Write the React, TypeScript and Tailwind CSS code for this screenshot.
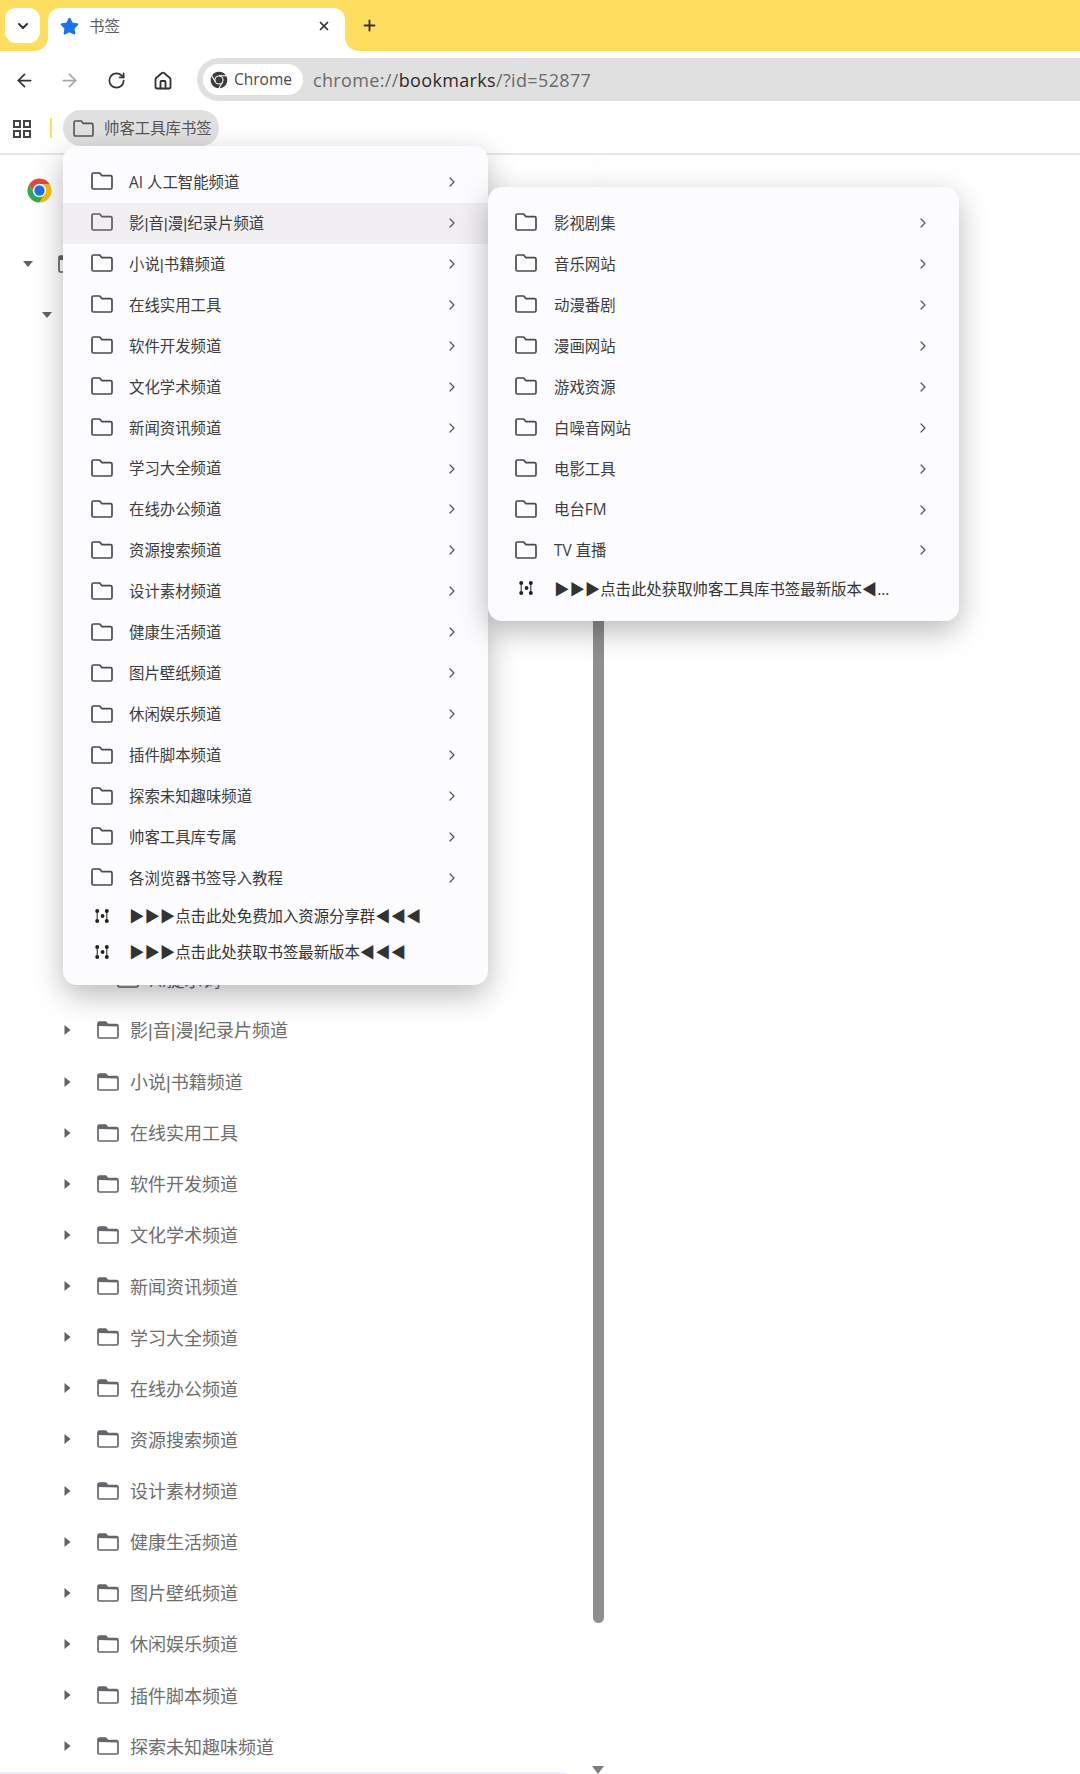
import React from 'react';
import { ArrowLeft, ArrowRight, ChevronDown, ChevronRight, Home, Plus, RotateCw, Star, X } from 'lucide-react';

const mainMenu = [
  'AI 人工智能频道',
  '影|音|漫|纪录片频道',
  '小说|书籍频道',
  '在线实用工具',
  '软件开发频道',
  '文化学术频道',
  '新闻资讯频道',
  '学习大全频道',
  '在线办公频道',
  '资源搜索频道',
  '设计素材频道',
  '健康生活频道',
  '图片壁纸频道',
  '休闲娱乐频道',
  '插件脚本频道',
  '探索未知趣味频道',
  '帅客工具库专属',
  '各浏览器书签导入教程',
];

const subMenu = ['影视剧集', '音乐网站', '动漫番剧', '漫画网站', '游戏资源', '白噪音网站', '电影工具', '电台FM', 'TV 直播'];

const treeRows = [
  '影|音|漫|纪录片频道',
  '小说|书籍频道',
  '在线实用工具',
  '软件开发频道',
  '文化学术频道',
  '新闻资讯频道',
  '学习大全频道',
  '在线办公频道',
  '资源搜索频道',
  '设计素材频道',
  '健康生活频道',
  '图片壁纸频道',
  '休闲娱乐频道',
  '插件脚本频道',
  '探索未知趣味频道',
];

// 竖线用窄字体显示
const Label: React.FC<{ text: string }> = ({ text }) => (
  <>
    {text.split('|').map((part, i) => (
      <React.Fragment key={i}>
        {i > 0 && <span className="font-['Liberation_Sans',sans-serif]">|</span>}
        {part}
      </React.Fragment>
    ))}
  </>
);

// 文件夹图标
const FolderIcon: React.FC<{ className?: string; filledTab?: boolean }> = ({ className, filledTab }) => (
  <svg viewBox="0 0 22 18" fill="none" className={className}>
    {filledTab && <path d="M1 5V2.5A1.5 1.5 0 0 1 2.5 1h6.2l2 3H19.5A1.5 1.5 0 0 1 21 5.5z" fill="currentColor" />}
    <path
      d="M2.5 1h6.2l2 2.6h8.8A1.5 1.5 0 0 1 21 5.1v10.4a1.5 1.5 0 0 1-1.5 1.5h-17A1.5 1.5 0 0 1 1 15.5v-13A1.5 1.5 0 0 1 2.5 1z"
      stroke="currentColor"
      strokeWidth="1.7"
      strokeLinejoin="round"
    />
  </svg>
);

// 书签小图标
const DotsIcon: React.FC = () => (
  <svg viewBox="0 0 14 14" className="w-[14px] h-[14px] text-[#222]" fill="currentColor">
    <path d="M2.2 2v10M11.8 2v10" stroke="currentColor" strokeWidth="1" />
    <circle cx="2.2" cy="2" r="2" />
    <circle cx="11.8" cy="2" r="2" />
    <circle cx="2.2" cy="12" r="2" />
    <circle cx="11.8" cy="12" r="2" />
    <circle cx="7.6" cy="7" r="1.9" />
  </svg>
);

const ChromeLogo: React.FC<{ className?: string; mono?: boolean }> = ({ className, mono }) => (
  <svg viewBox="0 0 48 48" className={className}>
    <path d="M24 4A20 20 0 0 1 41.32 14H24L15.34 29 6.68 14A20 20 0 0 1 24 4z" fill={mono ? '#3c3c3c' : '#e8453c'} />
    <path d="M41.32 14A20 20 0 0 1 24 44L32.66 29 24 14z" fill={mono ? '#3c3c3c' : '#fbbc04'} />
    <path d="M24 44A20 20 0 0 1 6.68 14L15.34 29H32.66z" fill={mono ? '#3c3c3c' : '#34a853'} />
    {mono && <path d="M24 14H44M15.34 29L5 11M32.66 29L22 47" stroke="#fff" strokeWidth="2.5" />}
    <circle cx="24" cy="24" r="11" fill="#fff" />
    <circle cx="24" cy="24" r="8.5" fill={mono ? '#3c3c3c' : '#1a73e8'} />
  </svg>
);

const CaretDown: React.FC = () => (
  <svg viewBox="0 0 12 8" className="w-[12px] h-[8px] text-[#5f6368]">
    <path d="M1 1h10L6 7z" fill="currentColor" />
  </svg>
);

const CaretRight: React.FC = () => (
  <svg viewBox="0 0 12 12" className="w-[12px] h-[12px] text-[#5f6368]">
    <path d="M3.5 1l6 5-6 5z" fill="currentColor" />
  </svg>
);

const MenuFolderRow: React.FC<{ label: string; active?: boolean; pl: string; gap: string; pr: string }> = ({ label, active, pl, gap, pr }) => (
  <div className={`h-[40.95px] flex items-center ${pl} ${pr} ${active ? 'bg-[#f1eff1]' : ''}`}>
    <FolderIcon className={`w-[22px] h-[18px] shrink-0 -mt-[2px] ${gap} ${active ? 'text-[#5d5d5d]' : 'text-[#4a4a4a]'}`} />
    <span className="flex-1 text-[15.4px] text-[#3d3d3d]">
      <Label text={label} />
    </span>
    <ChevronRight size={16} strokeWidth={1.8} className="text-[#555] -mt-[1px]" />
  </div>
);

const LinkRow: React.FC<{ label: string; gap: string }> = ({ label, gap }) => (
  <div className="h-[36px] flex items-center">
    <span className={`w-[22px] flex justify-center shrink-0 -mt-[2px] ${gap}`}>
      <DotsIcon />
    </span>
    <span className="text-[15.4px] text-[#333] whitespace-nowrap">{label}</span>
  </div>
);

const TreeRow: React.FC<{ label?: string; level: 0 | 1 | 2 | 3; open?: boolean; leaf?: boolean }> = ({ label, level, open, leaf }) => {
  const padding = ['pl-[22px]', 'pl-[41px]', 'pl-[61px]', 'pl-[81px]'][level];
  return (
    <div className={`h-[51.14px] flex items-center shrink-0 pt-[2px] ${padding}`}>
      <span className="w-[12px] flex justify-center shrink-0 mr-[24px] -mt-[2px]">
        {!leaf && (open ? <CaretDown /> : <CaretRight />)}
      </span>
      <FolderIcon filledTab className="w-[22px] h-[18px] text-[#63666a] shrink-0 mr-[11px] -mt-[2px]" />
      {label && (
        <span className="text-[18px] text-[#6e6e6e] whitespace-nowrap">
          <Label text={label} />
        </span>
      )}
    </div>
  );
};

export default function App() {
  return (
    <div className="relative w-[1080px] h-[1774px] overflow-hidden bg-white font-['Open_Sans','Noto_Sans_CJK_SC',sans-serif]">
      {/* 标签栏 */}
      <div className="flex h-[51px]">
        <div className="w-[48px] bg-[#ffdd5f] rounded-br-[14px] pt-[8px] pl-[5px]">
          <div className="w-[35px] h-[35px] bg-white rounded-[11px] flex items-center justify-center">
            <ChevronDown size={16} strokeWidth={3} className="text-[#333]" />
          </div>
        </div>
        <div className="w-[297px] bg-[#ffdd5f] pt-[8px]">
          <div className="h-full bg-white rounded-t-[12px] flex items-center pl-[12px] pr-[14px] pb-[5px]">
            <Star size={19} fill="#1a73e8" stroke="#1a73e8" className="mr-[10px] -mt-[1px]" />
            <span className="flex-1 text-[15.5px] text-[#5f5f5f]">书签</span>
            <X size={14} strokeWidth={3} className="text-[#333] -mt-[2px]" />
          </div>
        </div>
        <div className="flex-1 bg-[#ffdd5f] rounded-bl-[14px] pl-[16px] pt-[17px]">
          <Plus size={17} strokeWidth={2.6} className="text-[#333]" />
        </div>
      </div>

      {/* 工具栏 */}
      <div className="h-[57px] flex items-center">
        <ArrowLeft size={21} strokeWidth={2} className="ml-[14px] mt-[2px] text-[#333]" />
        <ArrowRight size={21} strokeWidth={2} className="ml-[24px] mt-[2px] text-[#a6a6a6]" />
        <RotateCw size={19} strokeWidth={2.2} className="ml-[27px] mt-[2px] text-[#333]" />
        <Home size={20} strokeWidth={2.2} className="ml-[27px] mt-[2px] text-[#333]" />
        <div className="ml-[24px] flex-1 h-[43px] bg-[#e0e0e0] rounded-l-full flex items-center pl-[6px]">
          <div className="h-[31px] w-[100px] bg-white rounded-full flex items-center pl-[6px]">
            <ChromeLogo mono className="w-[20px] h-[20px] mr-[5px]" />
            <span className="text-[15.5px] text-[#4a4a4a]">Chrome</span>
          </div>
          <span className="ml-[10px] mt-[1px] text-[18px] text-[#6a6a6a] tracking-[0.35px]">
            chrome://<span className="text-[#2b2b2b]">bookmarks</span>/?id=52877
          </span>
        </div>
      </div>

      {/* 书签栏 */}
      <div className="h-[47px] border-b-2 border-[#e6e6e6] flex items-start pt-[2px]">
        <svg viewBox="0 0 18 18" className="w-[18px] h-[18px] ml-[13px] mt-[10px] text-[#444]" fill="none" stroke="currentColor" strokeWidth="2">
          <rect x="1" y="1" width="6" height="6" />
          <rect x="11" y="1" width="6" height="6" />
          <rect x="1" y="11" width="6" height="6" />
          <rect x="11" y="11" width="6" height="6" />
        </svg>
        <div className="w-[2px] h-[20px] bg-[#ffdd5f] ml-[19px] mt-[8px]" />
        <div className="ml-[11px] w-[156px] h-[36px] rounded-full bg-[#e0e0e0] flex items-center pl-[10px]">
          <FolderIcon className="w-[21px] h-[17px] text-[#555] mr-[10px]" />
          <span className="mt-[1px] text-[15.4px] text-[#555] whitespace-nowrap">帅客工具库书签</span>
        </div>
      </div>

      {/* 书签管理页 */}
      <div className="flex h-[1619px]">
        <div className="w-[590px] flex flex-col">
          <div className="h-[83.5px] pt-[21px] pl-[25px] shrink-0">
            <ChromeLogo className="w-[29px] h-[29px]" />
          </div>
          <TreeRow level={0} open />
          <TreeRow level={1} open />
          <div className="h-[613px] shrink-0" />
          <TreeRow label="AI提示词" level={3} leaf />
          {treeRows.map((label) => (
            <TreeRow key={label} label={label} level={2} />
          ))}
          <div className="w-[585px] h-[51px] shrink-0 bg-[#e8f0fe] rounded-r-full" />
        </div>
        {/* 滚动条 */}
        <div className="w-[16px] bg-[#fefefe] flex flex-col items-center">
          <div className="w-[11px] h-[1242px] mt-[227px] bg-[#8f8f8f] rounded-b-full" />
          <svg viewBox="0 0 12 8" className="w-[12px] h-[8px] mt-[143px] text-[#7d7d7d]">
            <path d="M0 0h12L6 8z" fill="currentColor" />
          </svg>
        </div>
      </div>

      {/* 一级菜单 */}
      <div className="absolute left-[63px] top-[146px] w-[425px] pt-[16px] pb-[14px] bg-[#fcfbfd] rounded-[14px] shadow-[0_10px_30px_rgba(0,0,0,0.28)]">
        {mainMenu.map((label, i) => (
          <MenuFolderRow key={label} label={label} active={i === 1} pl="pl-[28px]" gap="mr-[16px]" pr="pr-[28px]" />
        ))}
        <div className="pl-[28px]">
          <LinkRow label="▶▶▶点击此处免费加入资源分享群◀◀◀" gap="mr-[16px]" />
          <LinkRow label="▶▶▶点击此处获取书签最新版本◀◀◀" gap="mr-[16px]" />
        </div>
      </div>

      {/* 二级菜单 */}
      <div className="absolute left-[488px] top-[187px] w-[471px] pt-[16px] pb-[14px] bg-[#fcfbfd] rounded-[14px] shadow-[0_10px_30px_rgba(0,0,0,0.28)]">
        {subMenu.map((label) => (
          <MenuFolderRow key={label} label={label} pl="pl-[27px]" gap="mr-[17px]" pr="pr-[28px]" />
        ))}
        <div className="pl-[27px]">
          <LinkRow label="▶▶▶点击此处获取帅客工具库书签最新版本◀..." gap="mr-[17px]" />
        </div>
      </div>
    </div>
  );
}
